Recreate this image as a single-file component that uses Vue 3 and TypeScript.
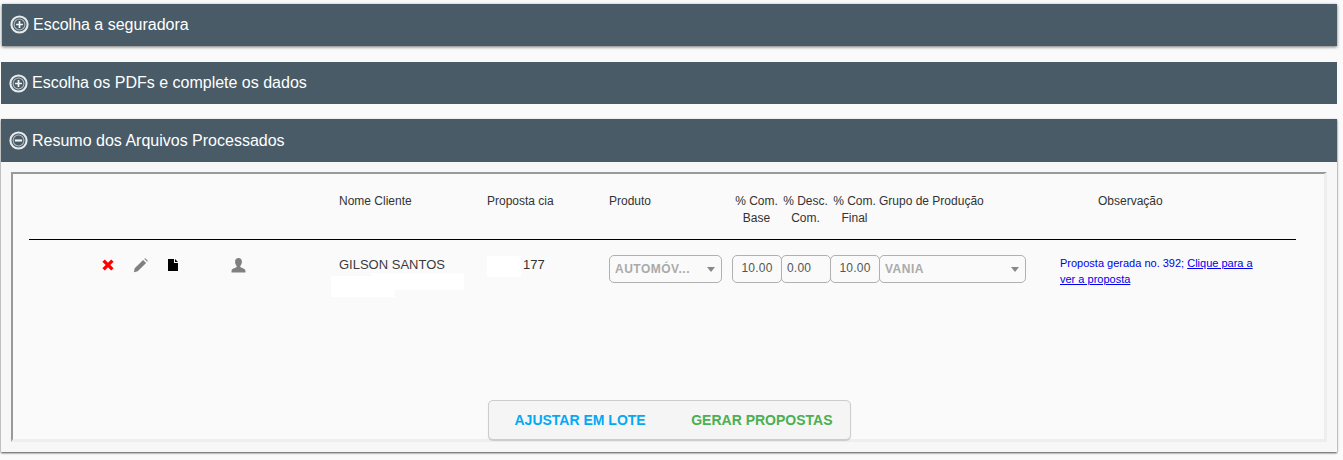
<script setup lang="ts">
const closed = [
  { title: 'Escolha a seguradora', cls: 'first' },
  { title: 'Escolha os PDFs e complete os dados', cls: 'second' },
]
const headers = [
  { text: 'Nome Cliente', cls: 'left' },
  { text: 'Proposta cia', cls: 'left' },
  { text: 'Produto', cls: 'left' },
  { text: '% Com. Base', cls: 'center' },
  { text: '% Desc. Com.', cls: 'center' },
  { text: '% Com. Final', cls: 'center' },
  { text: 'Grupo de Produção', cls: 'left nowrap' },
  { text: 'Observação', cls: 'obs-head' },
]
</script>

<template>
  <div class="page">
    <section v-for="item in closed" :key="item.title" class="panel" :class="item.cls">
      <header class="bar">
        <svg class="toggle" viewBox="0 0 20 20" aria-hidden="true">
          <circle cx="10" cy="10" r="8.500" fill="none" stroke="#e8ebec" stroke-width="2.200" />
          <circle cx="10" cy="10" r="5.700" fill="none" stroke="#b4bdc3" stroke-width="1.100" />
          <path d="M6.400 10h7.200M10 6.400v7.200" stroke="#f4f5f6" stroke-width="1.800" />
        </svg>
        <span>{{ item.title }}</span>
      </header>
    </section>

    <section class="panel open">
      <header class="bar">
        <svg class="toggle" viewBox="0 0 20 20" aria-hidden="true">
          <circle cx="10" cy="10" r="8.500" fill="none" stroke="#e8ebec" stroke-width="2.200" />
          <circle cx="10" cy="10" r="5.700" fill="none" stroke="#b4bdc3" stroke-width="1.100" />
          <path d="M6.200 10h7.600" stroke="#f4f5f6" stroke-width="2.200" />
        </svg>
        <span>Resumo dos Arquivos Processados</span>
      </header>
      <div class="body">
        <div class="box">
          <div class="grid head">
            <div></div>
            <div v-for="h in headers" :key="h.text" :class="h.cls">{{ h.text }}</div>
          </div>
          <div class="grid row">
            <div class="actions">
              <svg class="ico x" viewBox="0 0 14 14" aria-hidden="true">
                <path d="M2.600 2.600l8.800 8.800M11.400 2.600l-8.800 8.800" stroke="#f00" stroke-width="3.400" />
              </svg>
              <svg class="ico pencil" viewBox="0 0 14 14" aria-hidden="true">
                <path d="M.8 13.200l.8-3.600L9.400 1.800l2.800 2.800-7.800 7.800zM10.400.8l1-.6 2.400 2.400-.6 1z" fill="#808080" />
              </svg>
              <svg class="ico file" viewBox="0 0 12 14" aria-hidden="true">
                <path d="M1 1h6v4h4v8H1zM8 1l3 3H8z" fill="#000" />
              </svg>
              <svg class="ico user" viewBox="0 0 14 14" aria-hidden="true">
                <path d="M7 0c2 0 3.200 1.400 3.200 3.600 0 1.500-.6 3-1.500 3.800v1.100c.3.7 4.800 1.300 4.800 3.500v1.500H.5V12c0-2.200 4.500-2.800 4.800-3.500V7.400C4.400 6.600 3.800 5.100 3.800 3.600 3.800 1.400 5 0 7 0z" fill="#808080" />
              </svg>
            </div>
            <div class="name">
              GILSON SANTOS
              <i class="mask a"></i><i class="mask b"></i>
            </div>
            <div class="proposal"><i class="hide"></i>177</div>
            <div class="select small"><b>AUTOMÓV...</b><em></em></div>
            <div class="num">10.00</div>
            <div class="num l">0.00</div>
            <div class="num">10.00</div>
            <div class="select large"><b>VANIA</b><em></em></div>
            <div class="note">Proposta gerada no. 392; <a href="#">Clique para a ver a proposta</a></div>
          </div>
          <div class="spacer"></div>
          <div class="footer">
            <div class="btns">
              <button class="blue" type="button">AJUSTAR EM LOTE</button>
              <button class="green" type="button">GERAR PROPOSTAS</button>
            </div>
          </div>
        </div>
      </div>
    </section>
  </div>
</template>

<style>
html, body { margin: 0; background: #fafafa; }
</style>

<style scoped>
.page {
  width: 1343px;
  height: 460px;
  box-sizing: border-box;
  padding: 4px 6px 0 1px;
  overflow: hidden;
  font-family: "Liberation Sans", Arial, sans-serif;
  color: #333;
  background: #fafafa;
}
.panel { display: block; }
.first { margin-left: 1px; margin-bottom: 16px; box-shadow: 0 1px 3px rgba(0,0,0,.55); }
.second { margin-bottom: 15px; }
.bar {
  height: 42px;
  background: #485b67;
  color: #fff;
  display: flex;
  align-items: center;
  padding-left: 8px;
  font-size: 16px;
  gap: 4px;
}
.first .bar { padding-bottom: 1px; box-sizing: border-box; }
.open .bar { height: 43px; }
.toggle { width: 19px; height: 19px; flex: none; }
.open { box-shadow: 0 1px 2px rgba(0,0,0,.7); }
.body {
  height: 290px;
  box-sizing: border-box;
  padding: 10px;
  background: #f7f7f7;
}
.box {
  height: 270px;
  box-sizing: border-box;
  border-style: solid;
  border-width: 2px 3px 3px 2px;
  border-color: #999 #eee #eee #999;
  background: #fafafa;
  padding: 0 0 0 16px;
  display: flex;
  flex-direction: column;
}
.grid {
  display: grid;
  grid-template-columns: 310px 148px 122px 123px 49px 49px 49px 181px 236px;
  width: 1267px;
  font-size: 12px;
}
.head {
  height: 66px;
  box-sizing: border-box;
  padding-top: 18.500px;
  line-height: 17px;
  border-bottom: 1px solid #000;
}
.center { text-align: center; }
.nowrap { white-space: nowrap; }
.obs-head { padding-left: 38px; }
.row { height: 60px; padding-top: 15px; align-items: start; }
.actions { display: flex; height: 22px; align-items: center; margin-top: -1px; }
.ico { flex: none; display: block; }
.x { width: 14px; height: 14px; margin-left: 72px; }
.pencil { width: 15px; height: 15px; margin-left: 18px; }
.file { width: 12px; height: 14px; margin-left: 19px; }
.user { width: 15px; height: 15px; margin-left: 52px; }
.name { position: relative; padding-top: 2px; line-height: 15px; font-size: 13px; color: #3a3a3a; }
.mask { position: absolute; background: #fff; display: block; }
.a { left: -8px; top: 21px; width: 64px; height: 21px; }
.b { left: 32px; top: 18px; width: 93px; height: 17px; }
.proposal { display: flex; align-items: flex-start; line-height: 15px; padding-top: 2px; font-size: 13px; }
.hide { display: block; width: 34px; height: 21px; background: #fff; margin: -1px 2px 0 0; }
.select {
  height: 28px;
  box-sizing: border-box;
  border: 1px solid #b0b0b0;
  border-radius: 5px;
  background: #fafafa;
  display: flex;
  align-items: center;
  justify-content: space-between;
  padding: 0 6px 0 5px;
  font-size: 12px;
  color: #aaa;
}
.select b { letter-spacing: .5px; }
.select em {
  width: 0;
  height: 0;
  border-left: 4px solid transparent;
  border-right: 4px solid transparent;
  border-top: 5px solid #888;
}
.small { width: 113px; }
.large { width: 147px; }
.num {
  width: 50px;
  height: 28px;
  box-sizing: border-box;
  border: 1px solid #b0b0b0;
  border-radius: 5px;
  background: #fafafa;
  font-size: 12px;
  line-height: 24px;
  text-align: center;
  letter-spacing: .2px;
  color: #555;
}
.num.l { text-align: left; padding-left: 5px; }
.note {
  width: 200px;
  color: #0000ee;
  font-size: 11px;
  line-height: 16px;
}
.note a { color: #0000ee; }
.spacer { flex: 1; }
.footer { display: flex; padding-left: 459px; margin-bottom: -1px; }
.btns {
  width: 363px;
  height: 40px;
  box-sizing: border-box;
  border: 1px solid #ccc;
  border-radius: 5px;
  background: #f5f5f5;
  box-shadow: 0 1px 1px rgba(0,0,0,.15);
  display: flex;
  align-items: center;
  padding-left: 25.500px;
  gap: 45.500px;
}
button {
  border: 0;
  background: none;
  padding: 0;
  font: bold 14px "Liberation Sans", Arial, sans-serif;
}
.blue { color: #03a9f4; }
.green { color: #4caf50; }
</style>
